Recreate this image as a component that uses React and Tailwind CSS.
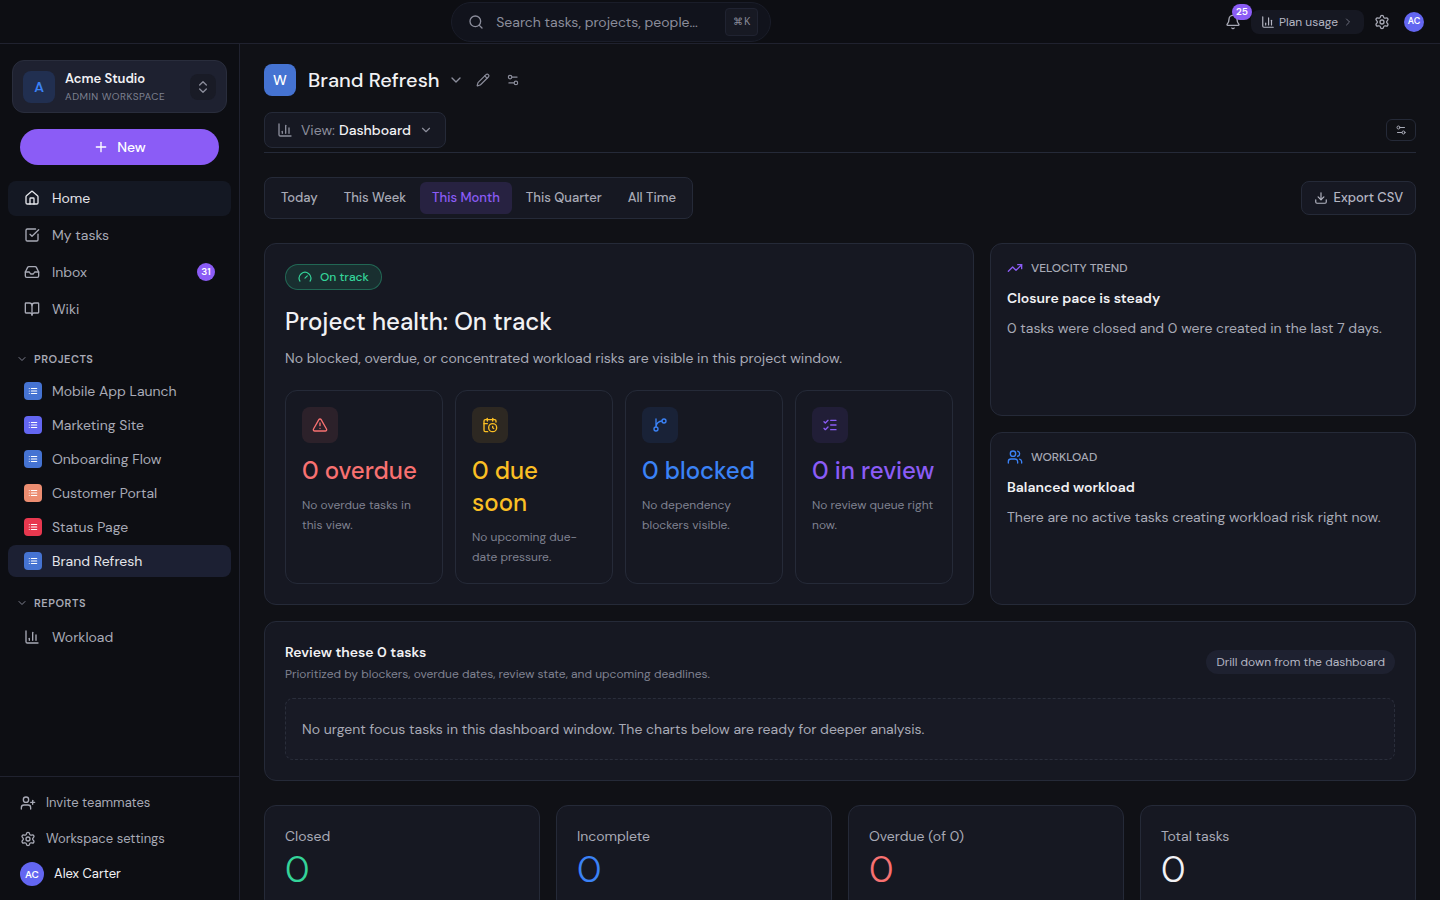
import React from "react";
import {
  Search, Bell, ChartColumn, ChevronRight, ChevronDown, Settings, ChevronsUpDown, Plus, House,
  SquareCheckBig, Inbox, BookOpen, UserPlus, Pencil, Settings2, Download, Gauge, TriangleAlert,
  CalendarClock, ListChecks, TrendingUp, Users,
} from "lucide-react";

function ListIcon() {
  return (
    <svg width="10" height="10" viewBox="0 0 24 24" fill="none" stroke="currentColor" strokeWidth="2.5" strokeLinecap="round" strokeLinejoin="round" aria-hidden="true">
      <path d="M8 6h13M8 12h13M8 18h13M3 6h.01M3 12h.01M3 18h.01" />
    </svg>
  );
}

function BranchIcon({ size = 16 }) {
  return (
    <svg width={size} height={size} viewBox="0 0 24 24" fill="none" stroke="currentColor" strokeWidth="2" strokeLinecap="round" strokeLinejoin="round" aria-hidden="true">
      <path d="M15 6a9 9 0 0 0-9 9V3" />
      <circle cx="18" cy="6" r="3" />
      <circle cx="6" cy="18" r="3" />
    </svg>
  );
}

const nav = [
  { label: "Home", icon: House, active: true },
  { label: "My tasks", icon: SquareCheckBig },
  { label: "Inbox", icon: Inbox, badge: 31 },
  { label: "Wiki", icon: BookOpen },
];

const projects = [
  { label: "Mobile App Launch", color: "bg-[#4573d2]" },
  { label: "Marketing Site", color: "bg-[#6366f1]" },
  { label: "Onboarding Flow", color: "bg-[#4573d2]" },
  { label: "Customer Portal", color: "bg-[#ec8d71]" },
  { label: "Status Page", color: "bg-[#e8384f]" },
  { label: "Brand Refresh", color: "bg-[#4573d2]", active: true },
];

const ranges = ["Today", "This Week", "This Month", "This Quarter", "All Time"];

const risks = [
  { title: "0 overdue", note: "No overdue tasks in this view.", icon: TriangleAlert, text: "text-[#f87171]", tile: "bg-[#f87171]/10" },
  { title: "0 due soon", note: "No upcoming due-date pressure.", icon: CalendarClock, text: "text-[#fbbf24]", tile: "bg-[#fbbf24]/10" },
  { title: "0 blocked", note: "No dependency blockers visible.", icon: BranchIcon, text: "text-[#3b82f6]", tile: "bg-[#3b82f6]/10" },
  { title: "0 in review", note: "No review queue right now.", icon: ListChecks, text: "text-[#8b5cf6]", tile: "bg-[#8b5cf6]/10" },
];

const insights = [
  { label: "Velocity trend", icon: TrendingUp, color: "text-[#8b5cf6]", title: "Closure pace is steady", body: "0 tasks were closed and 0 were created in the last 7 days." },
  { label: "Workload", icon: Users, color: "text-[#3b82f6]", title: "Balanced workload", body: "There are no active tasks creating workload risk right now." },
];

const stats = [
  { label: "Closed", color: "text-[#34d399]" },
  { label: "Incomplete", color: "text-[#3b82f6]" },
  { label: "Overdue (of 0)", color: "text-[#f87171]" },
  { label: "Total tasks", color: "text-[#f1f1f4]" },
];

function TopBar() {
  return (
    <header className="flex h-11 shrink-0 items-center border-b border-[#20222f] bg-[#0d0e13] px-4">
      <div className="flex-2" />
      <label className="flex h-10 w-80 items-center gap-3 rounded-full border border-[#1a1d29] bg-[#11131c] pr-3 pl-4">
        <Search size={16} className="shrink-0 text-[#8b8d9b]" />
        <input
          type="search"
          aria-label="Search"
          placeholder="Search tasks, projects, people..."
          className="min-w-0 flex-1 bg-transparent text-sm text-[#b4b6c3] outline-none placeholder:text-[#8b8d9b]"
        />
        <kbd className="flex h-7 items-center gap-px rounded border border-[#202331] bg-[#171923] px-[7px] font-sans text-[10px] text-[#8b8d9b]"><span>⌘</span><span>K</span></kbd>
      </label>
      <div className="flex flex-3 items-center justify-end">
        <button type="button" aria-label="Notifications" className="relative mr-2.5 size-4 text-[#a8aab6]">
          <Bell size={16} />
          <span className="absolute -top-2.5 left-[7px] flex h-4 items-center rounded-full bg-[#8b5cf6] px-1 text-[10px] leading-4 font-semibold text-white">25</span>
        </button>
        <button type="button" className="flex h-6 items-center gap-1 rounded-lg bg-[#161822] px-2.5 text-xs text-[#b4b6c3]">
          <ChartColumn size={14} /> Plan usage <ChevronRight size={12} className="text-[#6f7180]" />
        </button>
        <button type="button" aria-label="Settings" className="mr-3.5 ml-2.5 text-[#a8aab6]"><Settings size={16} /></button>
        <button type="button" aria-label="Account" className="flex size-5 items-center justify-center rounded-full bg-[#6366f1] text-[9px] font-semibold text-white">AC</button>
      </div>
    </header>
  );
}

function SectionTitle({ children }) {
  return (
    <button type="button" className="flex h-8 items-center gap-1.5 px-2 text-[11px] font-semibold tracking-wider text-[#a8aab6] uppercase">
      <ChevronDown size={12} className="text-[#7f8190]" />
      {children}
    </button>
  );
}

function Sidebar() {
  return (
    <aside className="flex w-60 shrink-0 flex-col border-r border-[#20222f] bg-[#0d0e13]">
      <div className="px-3 pt-4">
        <button type="button" className="flex w-full items-center rounded-xl border border-[#292d3c] bg-[#1e2130] px-2.5 py-2 text-left">
          <span className="flex size-8 items-center justify-center rounded-lg bg-[#212f50] text-sm font-semibold text-[#3b82f6]">A</span>
          <span className="ml-2.5 flex-1">
            <span className="block text-[13px] leading-5 font-semibold text-[#f1f1f4]">Acme Studio</span>
            <span className="block text-[10px] leading-[15px] tracking-wider text-[#7f8190] uppercase">Admin workspace</span>
          </span>
          <span className="flex size-[26px] items-center justify-center rounded-lg bg-[#191b26] text-[#8b8d9b]"><ChevronsUpDown size={16} /></span>
        </button>
      </div>
      <div className="px-5 py-4">
        <button type="button" className="flex h-9 w-full items-center justify-center gap-2 rounded-full bg-[#8b5cf6] text-sm font-medium text-white">
          <Plus size={16} /> New
        </button>
      </div>
      <nav className="px-2">
        <div className="flex flex-col gap-0.5">
          {nav.map(({ label, icon: Icon, active, badge }) => (
            <a key={label} href="#" className={`flex h-[35px] items-center gap-3 rounded-lg px-4 pb-px text-sm ${active ? "bg-[#141823] text-[#e4e5ea]" : "text-[#a8aab6]"}`}>
              <Icon size={16} />
              <span className="flex-1">{label}</span>
              {badge && <span className="flex size-[18px] items-center justify-center rounded-full bg-[#8b5cf6] text-[10px] font-semibold text-white">{badge}</span>}
            </a>
          ))}
        </div>
        <div className="mt-4 flex flex-col items-start">
          <SectionTitle>Projects</SectionTitle>
          <div className="flex w-full flex-col gap-0.5">
            {projects.map(({ label, color, active }) => (
              <a key={label} href="#" className={`flex h-8 items-center gap-2.5 rounded-lg px-4 text-sm ${active ? "bg-[#1c2033] text-[#e4e5ea]" : "text-[#a8aab6]"}`}>
                <span className={`flex size-[18px] items-center justify-center rounded ${color} text-white`}><ListIcon /></span>
                {label}
              </a>
            ))}
          </div>
        </div>
        <div className="mt-2.5 flex flex-col items-start">
          <SectionTitle>Reports</SectionTitle>
          <a href="#" className="flex h-9 w-full items-center gap-3 rounded-lg px-4 text-sm text-[#a8aab6]"><ChartColumn size={16} />Workload</a>
        </div>
      </nav>
      <div className="mt-auto border-t border-[#20222f] px-5 pt-2 pb-[9px] text-[13px] text-[#a8aab6]">
        <a href="#" className="flex h-9 items-center gap-2.5"><UserPlus size={16} />Invite teammates</a>
        <a href="#" className="flex h-9 items-center gap-2.5"><Settings size={16} />Workspace settings</a>
        <button type="button" className="flex h-[34px] items-center gap-2.5 text-[#f1f1f4]">
          <span className="flex size-6 items-center justify-center rounded-full bg-[#6366f1] text-[10px] font-semibold text-white">AC</span>
          Alex Carter
        </button>
      </div>
    </aside>
  );
}

function PageHeader() {
  return (
    <div>
      <div className="flex h-8 items-center">
        <span className="flex size-8 items-center justify-center rounded-lg bg-[#4573d2] text-sm font-medium text-white">W</span>
        <h1 className="ml-3 text-xl font-[550] text-[#f1f1f4]">Brand Refresh</h1>
        <button type="button" aria-label="Project menu" className="ml-2 text-[#8b8d9b]"><ChevronDown size={16} /></button>
        <button type="button" aria-label="Rename project" className="ml-3 text-[#8b8d9b]"><Pencil size={14} /></button>
        <button type="button" aria-label="Project options" className="ml-4 text-[#8b8d9b]"><Settings2 size={14} /></button>
      </div>
      <div className="mt-4 flex items-center justify-between border-b border-[#252a38] pb-1">
        <button type="button" className="flex h-9 items-center rounded-lg border border-[#252a38] bg-[#161822] px-3 text-sm text-[#8b8d9b]">
          <ChartColumn size={16} />
          <span className="mr-1 ml-2">View:</span>
          <span className="font-medium text-[#f1f1f4]">Dashboard</span>
          <ChevronDown size={14} className="ml-2" />
        </button>
        <button type="button" aria-label="View options" className="flex h-[22px] w-[30px] items-center justify-center rounded-md border border-[#252a38] text-[#a8aab6]"><Settings2 size={12} /></button>
      </div>
    </div>
  );
}

function HealthCard() {
  return (
    <section className="rounded-xl border border-[#252a38] bg-[#161822] p-5">
      <span className="flex h-[26px] w-fit items-center gap-2 rounded-full border border-[#34d399]/35 bg-[#34d399]/12 px-3 text-xs font-medium text-[#34d399]">
        <Gauge size={14} /> On track
      </span>
      <h2 className="mt-4 text-2xl leading-8 font-[550] text-[#f1f1f4]">Project health: On track</h2>
      <p className="mt-2 text-sm leading-6 text-[#a8aab6]">No blocked, overdue, or concentrated workload risks are visible in this project window.</p>
      <div className="mt-5 grid grid-cols-4 gap-3">
        {risks.map(({ title, note, icon: Icon, text, tile }) => (
          <button key={title} type="button" className="flex flex-col rounded-xl border border-[#252a38] p-4 text-left">
            <span className={`flex size-9 items-center justify-center rounded-lg ${tile} ${text}`}><Icon size={16} /></span>
            <span className={`mt-3 text-2xl leading-8 font-[550] ${text}`}>{title}</span>
            <span className="mt-2 text-xs leading-5 text-[#7f8190]">{note}</span>
          </button>
        ))}
      </div>
    </section>
  );
}

export default function App() {
  return (
    <div className="flex h-screen flex-col overflow-hidden bg-[#101116] font-['DM_Sans','Inter',sans-serif] text-[#f1f1f4]">
      <TopBar />
      <div className="flex min-h-0 flex-1">
        <Sidebar />
        <main className="min-w-0 flex-1 overflow-hidden px-6 pt-5">
          <PageHeader />
          <div className="mt-6 flex items-center justify-between">
            <div className="flex gap-0.5 rounded-lg border border-[#252a38] bg-[#161822] p-1">
              {ranges.map((range) => (
                <button key={range} type="button" className={`h-8 rounded-md px-3 text-[13px] font-medium ${range === "This Month" ? "bg-[#272241] text-[#8b5cf6]" : "text-[#a8aab6]"}`}>{range}</button>
              ))}
            </div>
            <button type="button" className="flex h-[34px] items-center gap-1.5 rounded-lg border border-[#252a38] bg-[#161822] px-3 text-[13px] font-medium text-[#b4b6c3]">
              <Download size={14} /> Export CSV
            </button>
          </div>
          <div className="mt-6 grid grid-cols-[5fr_3fr] gap-4">
            <HealthCard />
            <div className="grid grid-rows-2 gap-4">
              {insights.map(({ label, icon: Icon, color, title, body }) => (
                <section key={label} className="rounded-xl border border-[#252a38] bg-[#161822] p-4">
                  <h3 className="flex h-4 items-center gap-2 text-xs font-medium text-[#a8aab6] uppercase"><Icon size={16} className={color} />{label}</h3>
                  <p className="mt-2.5 text-sm leading-6 font-semibold">{title}</p>
                  <p className="mt-1.5 text-sm leading-6 text-[#a8aab6]">{body}</p>
                </section>
              ))}
            </div>
          </div>
          <section className="mt-4 rounded-xl border border-[#252a38] bg-[#161822] p-5">
            <div className="flex items-center justify-between">
              <div>
                <h2 className="text-sm leading-5 font-semibold">Review these 0 tasks</h2>
                <p className="mt-1 text-xs leading-4 text-[#7f8190]">Prioritized by blockers, overdue dates, review state, and upcoming deadlines.</p>
              </div>
              <span className="rounded-full bg-[#1e2130] px-2.5 py-1 text-xs leading-4 text-[#b4b6c3]">Drill down from the dashboard</span>
            </div>
            <p className="mt-4 rounded-lg border border-dashed border-[#2a2e3b] bg-[#181a25] px-4 py-5 text-sm leading-5 text-[#a8aab6]">No urgent focus tasks in this dashboard window. The charts below are ready for deeper analysis.</p>
          </section>
          <div className="mt-6 grid grid-cols-4 gap-4">
            {stats.map(({ label, color }) => (
              <section key={label} className="rounded-xl border border-[#252a38] bg-[#161822] p-5">
                <h3 className="text-sm leading-5 text-[#a8aab6]">{label}</h3>
                <p className={`mt-1 text-4xl leading-10 font-light ${color}`}>0</p>
              </section>
            ))}
          </div>
        </main>
      </div>
    </div>
  );
}
